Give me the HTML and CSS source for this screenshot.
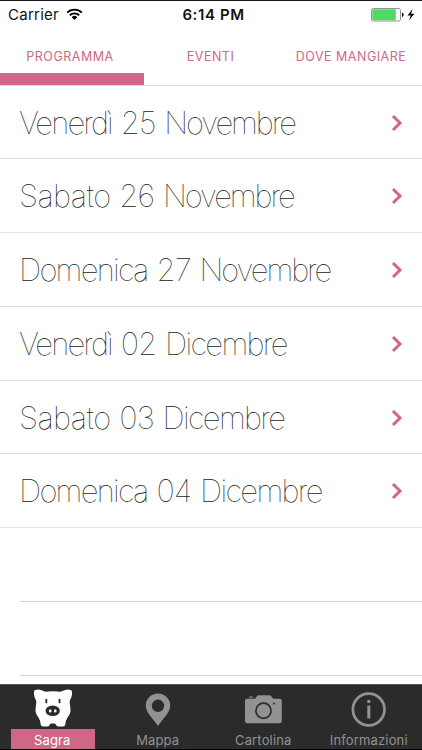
FILE: index.html
```html
<!DOCTYPE html>
<html lang="it">
<head>
    <meta charset="UTF-8">
    <meta name="viewport" content="width=device-width, initial-scale=1.0">
    <title>Programma</title>
    <link rel="stylesheet" href="styles.css">
</head>
<body>
    <div class="app">
        <div class="status-bar">
            <div class="carrier">
                <span>Carrier</span>
                <svg class="wifi" width="17" height="13" viewBox="0 0 17 13">
                    <path d="M1.2 4.6a10.4 10.4 0 0 1 14.6 0M3.8 7.3a6.7 6.7 0 0 1 9.4 0" fill="none" stroke="#000" stroke-width="1.9"/>
                    <path d="M5.7 9.2a4 4 0 0 1 5.6 0L8.5 12z"/>
                </svg>
            </div>
            <span class="time">6:14 PM</span>
            <div class="battery">
                <svg width="44" height="14" viewBox="0 0 44 14">
                    <rect x="0.5" y="0.5" width="29" height="12.5" rx="1.8" fill="#fff" stroke="#777" stroke-width="0.8"/>
                    <rect x="1.3" y="1.3" width="23.5" height="11" rx="0.8" fill="#4cd964"/>
                    <path d="M31 4.6q1.7.5 1.7 2.2T31 9z"/>
                    <path d="M41.5.9l-5 6.5h3.2l-1.7 5.2 5.3-6.9h-3.2z"/>
                </svg>
            </div>
        </div>

        <div class="tabs">
            <a class="tab active">PROGRAMMA</a>
            <a class="tab">EVENTI</a>
            <a class="tab last">DOVE MANGIARE</a>
        </div>

        <ul class="days">
            <li class="day"><span class="date">Venerdì <span class="num">25</span> <span class="november">Novembre</span></span><svg class="chevron" viewBox="0 0 12 18"><path d="M2 2l7 7-7 7"/></svg></li>
            <li class="day"><span class="date"><span class="saturday">Sabato</span> <span class="num">26</span> <span class="november">Novembre</span></span><svg class="chevron" viewBox="0 0 12 18"><path d="M2 2l7 7-7 7"/></svg></li>
            <li class="day"><span class="date"><span class="sunday">Domenica</span> <span class="num">27</span> <span class="november">Novembre</span></span><svg class="chevron" viewBox="0 0 12 18"><path d="M2 2l7 7-7 7"/></svg></li>
            <li class="day"><span class="date">Venerdì <span class="num">02</span> <span class="december">Dicembre</span></span><svg class="chevron" viewBox="0 0 12 18"><path d="M2 2l7 7-7 7"/></svg></li>
            <li class="day"><span class="date"><span class="saturday">Sabato</span> <span class="num">03</span> <span class="december">Dicembre</span></span><svg class="chevron" viewBox="0 0 12 18"><path d="M2 2l7 7-7 7"/></svg></li>
            <li class="day"><span class="date"><span class="sunday">Domenica</span> <span class="num">04</span> <span class="december">Dicembre</span></span><svg class="chevron" viewBox="0 0 12 18"><path d="M2 2l7 7-7 7"/></svg></li>
            <li class="empty"></li>
            <li class="empty"></li>
        </ul>

        <div class="bottom-bar">
            <a class="item selected">
                <svg class="icon" width="42" height="42" viewBox="0 0 42 42">
                    <path d="M2.300 4.600Q6.500 2 11.500 5Q13.500 6.300 16 5.500Q21 4.800 26 5.500Q28.500 6.300 30.500 5Q35.500 2 39.700 4.600Q41 9.500 38 14Q37.300 16.500 38.200 20.500Q39.500 27 35.500 31.500Q33.800 34 33.300 38.500Q33 40.500 31 40.500H26.500Q24.800 40.500 24.200 39Q23.600 37.500 22.500 37.500H19.200Q18.100 37.500 17.500 39Q16.900 40.500 15.200 40.500H11Q9 40.500 8.700 38.500Q8.200 34 6.500 31.500Q2.500 27 3.800 20.500Q4.700 16.500 4 14Q1 9.500 2.300 4.600Z" fill="#fff"/>
                    <ellipse cx="20.700" cy="24.700" rx="7.200" ry="5.300" fill="#2b2b2b"/>
                    <rect x="13.400" y="12.700" width="1.800" height="4.600" rx="0.900" fill="#2b2b2b"/>
                    <rect x="26.600" y="12.700" width="1.800" height="4.600" rx="0.900" fill="#2b2b2b"/>
                    <ellipse cx="18.200" cy="24.900" rx="1.300" ry="1.700" fill="#fff"/>
                    <ellipse cx="23.300" cy="24.900" rx="1.300" ry="1.700" fill="#fff"/>
                </svg>
                <span class="label">Sagra</span>
            </a>
            <a class="item">
                <svg class="icon" width="42" height="42" viewBox="0 0 42 42">
                    <path fill-rule="evenodd" d="M21 7.500c-6.800 0-12.200 5.300-12.200 12 0 7.500 7.200 12.500 12.200 20.500 5-8 12.200-13 12.200-20.500 0-6.700-5.400-12-12.200-12zm0 6.100a6.200 6.200 0 1 1 0 12.400 6.200 6.200 0 0 1 0-12.400z" fill="#929292"/>
                </svg>
                <span class="label">Mappa</span>
            </a>
            <a class="item">
                <svg class="icon" width="42" height="42" viewBox="0 0 42 42">
                    <path d="M4 12.800h7q1.200 0 2-1.300L14.300 9.800Q14.700 9.200 15.800 9.200h10.400q1.100 0 1.600.600l1.700 2.200Q30.200 12.800 31.500 12.800H36.500Q38.800 12.800 38.800 15V35q0 2.200-2.200 2.200H4.200q-2.200 0-2.200-2.200V15q0-2.200 2-2.200zM6.300 10.400h3.500v1.400H6.300z" fill="#929292"/>
                    <circle cx="20.500" cy="24.800" r="7.600" fill="none" stroke="#2b2b2b" stroke-width="1.700"/>
                    <circle cx="31" cy="17.500" r="1" fill="#2b2b2b"/>
                </svg>
                <span class="label">Cartolina</span>
            </a>
            <a class="item">
                <svg class="icon" width="42" height="42" viewBox="0 0 42 42">
                    <circle cx="20.700" cy="23.500" r="15.800" fill="none" stroke="#929292" stroke-width="2.700"/>
                    <path d="M19.300 14h3v3h-3zM19.300 19.500h3v13h-3z" fill="#929292"/>
                </svg>
                <span class="label">Informazioni</span>
            </a>
        </div>
    </div>
</body>
</html>
```
FILE: styles.css
```css
* {
    margin: 0;
    padding: 0;
    box-sizing: border-box;
}

body {
    font-family: Inter, "Liberation Sans", sans-serif;
    background-color: #fff;
}

.app {
    height: 750px;
    display: flex;
    flex-direction: column;
    overflow: hidden;
    border-top: 1px solid #161219;
    border-bottom: 1px solid #000;
}

.status-bar {
    height: 27px;
    display: grid;
    grid-template-columns: 1fr auto 1fr;
    align-items: center;
    padding: 0 7px 0 8px;
    font-size: 15px;
    letter-spacing: 0.25px;
    color: #111;
}

.carrier {
    display: flex;
    align-items: center;
    gap: 7px;
}

.time {
    font-weight: 600;
    letter-spacing: 0.6px;
    padding-left: 4px;
}

.battery {
    display: flex;
    justify-content: flex-end;
}

.tabs {
    height: 58px;
    flex-shrink: 0;
    display: grid;
    grid-template-columns: 144px 133px 145px;
    border-bottom: 1px solid #dedede;
}

.tab {
    display: flex;
    align-items: center;
    justify-content: center;
    padding-top: 12px;
    font-size: 12.5px;
    letter-spacing: 0.5px;
    color: #cf6786;
    border-bottom: 12px solid transparent;
    white-space: nowrap;
}

.tab.active {
    border-bottom-color: #cf6786;
    padding-right: 4px;
}

.tab.last {
    padding-left: 3px;
}

.days {
    flex: 1;
    min-height: 0;
    list-style: none;
    overflow: hidden;
}

.day {
    height: 73.86px;
    display: flex;
    align-items: center;
    justify-content: space-between;
    padding: 0 19px;
    border-bottom: 1px solid #e2e2e2;
}

.day:first-child {
    height: 73px;
}

.date {
    font-size: 31px;
    font-weight: 100;
    color: #222;
    letter-spacing: -1.9px;
    word-spacing: 2px;
    white-space: nowrap;
}

.saturday {
    letter-spacing: -0.6px;
}

.sunday {
    letter-spacing: -1.75px;
}

.num {
    letter-spacing: -1px;
}

.november {
    letter-spacing: -2.1px;
}

.december {
    letter-spacing: -1.7px;
}

.chevron {
    width: 12px;
    height: 18px;
    margin-top: 1px;
    fill: none;
    stroke: #cf6786;
    stroke-width: 3;
}

.empty {
    height: 73.86px;
    margin-left: 20px;
    border-bottom: 1px solid #d4d4d4;
}

.bottom-bar {
    height: 65px;
    flex-shrink: 0;
    display: grid;
    grid-template-columns: repeat(4, 1fr);
    background-color: #2b2b2b;
    border-top: 1px solid #555;
}

.item {
    display: flex;
    flex-direction: column;
    align-items: center;
    color: #929292;
}

.icon {
    margin-top: 1px;
}

.label {
    width: 84px;
    height: 21px;
    margin-top: 1px;
    padding-right: 1px;
    font-size: 13px;
    line-height: 22px;
    letter-spacing: 0.15px;
    text-align: center;
}

.selected .label {
    color: #fff;
    background-color: #cf6786;
}
```
